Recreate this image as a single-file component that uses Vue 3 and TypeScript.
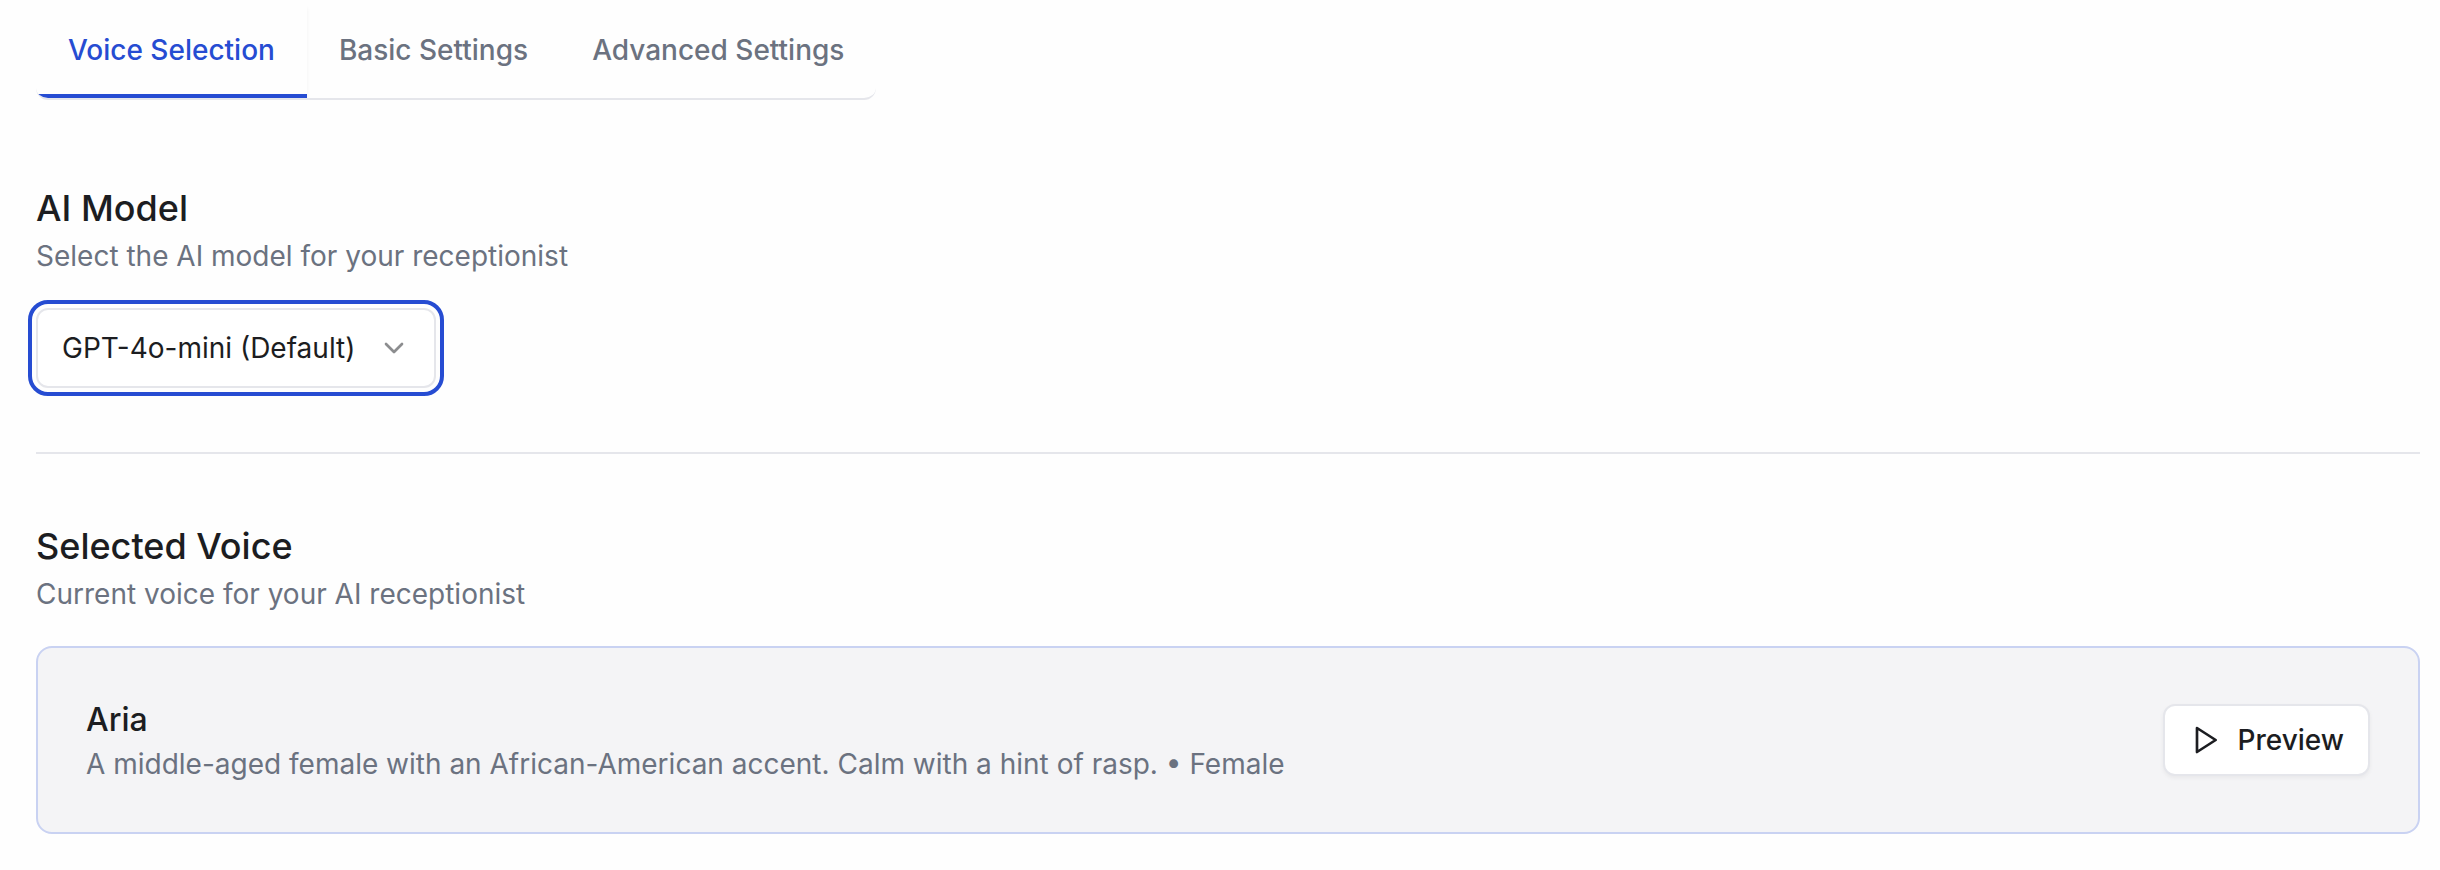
<script setup lang="ts">
import { ref } from 'vue'

interface Tab {
  id: string
  label: string
}

const tabs: Tab[] = [
  { id: 'voice', label: 'Voice Selection' },
  { id: 'basic', label: 'Basic Settings' },
  { id: 'advanced', label: 'Advanced Settings' },
]
const activeTab = ref('voice')

const models: string[] = ['GPT-4o-mini (Default)', 'GPT-4o']
const model = ref(models[0])

const voice = {
  name: 'Aria',
  description: 'A middle-aged female with an African-American accent. Calm with a hint of rasp.',
  gender: 'Female',
}
</script>

<template>
  <main class="page">
    <div class="tabs" role="tablist">
      <button
        v-for="tab in tabs"
        :key="tab.id"
        type="button"
        role="tab"
        class="tab"
        :class="{ active: tab.id === activeTab }"
        :aria-selected="tab.id === activeTab"
        @click="activeTab = tab.id"
      >
        {{ tab.label }}
      </button>
    </div>

    <section class="section">
      <h2 class="title"><label for="model">AI Model</label></h2>
      <p class="hint">Select the AI model for your receptionist</p>
      <div class="select-wrap">
        <select id="model" v-model="model" class="select">
          <option v-for="m in models" :key="m" :value="m">{{ m }}</option>
        </select>
        <svg class="chevron" viewBox="0 0 24 24" aria-hidden="true">
          <path d="m6 9 6 6 6-6" />
        </svg>
      </div>
    </section>

    <hr class="divider" />

    <section class="section">
      <h2 class="title">Selected Voice</h2>
      <p class="hint">Current voice for your AI receptionist</p>
      <article class="card">
        <div>
          <h3 class="name">{{ voice.name }}</h3>
          <p class="hint">{{ voice.description }} • {{ voice.gender }}</p>
        </div>
        <button type="button" class="preview">
          <svg class="play" viewBox="0 0 24 24" aria-hidden="true">
            <path d="M6 3 20 12 6 21Z" />
          </svg>
          Preview
        </button>
      </article>
    </section>
  </main>
</template>

<style>
body {
  background: #fefefe;
}
</style>

<style scoped>
.page {
  padding: 6px 20px 36px 36px;
  font-family: Inter, 'Liberation Sans', sans-serif;
  font-size: 28px;
  line-height: 40px;
  color: #1c1d21;
}

.tabs {
  display: flex;
  width: fit-content;
  margin-bottom: 80px;
  border-bottom: 2px solid #e5e6eb;
  border-radius: 12px;
  overflow: hidden;
}

.tab {
  padding: 24px 32px;
  border: 0;
  border-bottom: 4px solid transparent;
  background: transparent;
  color: #6b7280;
  font: inherit;
  font-weight: 500;
  cursor: pointer;
}

.tab.active {
  border-bottom-color: #264cd2;
  color: #264cd2;
  box-shadow: 0 2px 4px rgba(0, 0, 0, 0.05);
}

.title {
  margin: 0;
  font-size: 36px;
  line-height: 56px;
  font-weight: 500;
}

.hint {
  margin: 0;
  color: #6b7280;
}

.select-wrap {
  display: grid;
  align-items: center;
  width: 400px;
  max-width: 100%;
  margin-top: 32px;
}

.select {
  grid-area: 1 / 1;
  width: 100%;
  height: 80px;
  padding: 0 64px 0 24px;
  border: 2px solid #e5e6eb;
  border-radius: 12px;
  outline: 4px solid #264cd2;
  outline-offset: 4px;
  appearance: none;
  background: #fff;
  color: inherit;
  font: inherit;
}

.chevron {
  grid-area: 1 / 1;
  justify-self: end;
  width: 32px;
  height: 32px;
  margin-right: 26px;
  fill: none;
  stroke: currentColor;
  stroke-width: 2;
  stroke-linecap: round;
  stroke-linejoin: round;
  opacity: 0.5;
  pointer-events: none;
}

.divider {
  height: 2px;
  margin: 64px 0;
  border: 0;
  background: #e5e6eb;
}

.card {
  display: flex;
  align-items: center;
  justify-content: space-between;
  gap: 32px;
  margin-top: 32px;
  padding: 48px;
  border: 2px solid #c9d2f2;
  border-radius: 16px;
  background: #f4f4f6;
}

.name {
  margin: 0;
  font-size: 32px;
  line-height: 48px;
  font-weight: 500;
}

.preview {
  display: flex;
  align-items: center;
  gap: 16px;
  height: 72px;
  padding: 0 24px;
  border: 2px solid #e5e6eb;
  border-radius: 12px;
  background: #fff;
  box-shadow: 0 2px 4px rgba(0, 0, 0, 0.05);
  color: inherit;
  font: inherit;
  font-weight: 500;
  cursor: pointer;
}

.play {
  width: 32px;
  height: 32px;
  fill: none;
  stroke: currentColor;
  stroke-width: 2;
  stroke-linejoin: round;
}
</style>
